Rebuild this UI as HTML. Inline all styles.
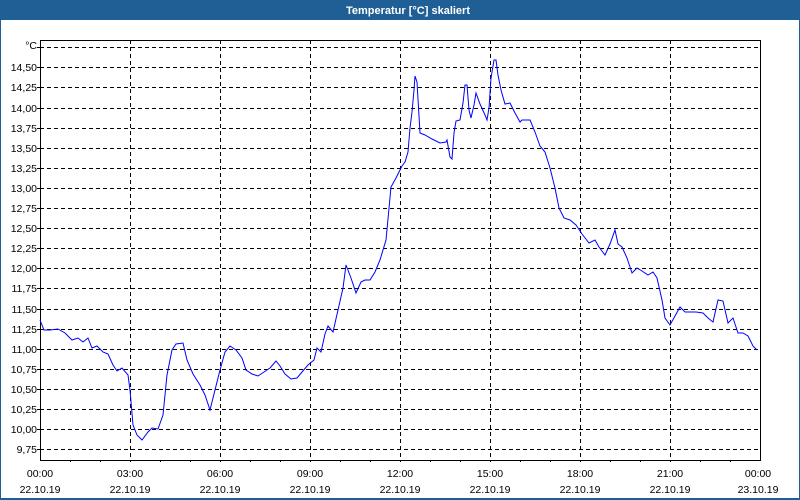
<!DOCTYPE html>
<html><head><meta charset="utf-8"><style>
html,body{margin:0;padding:0;width:800px;height:500px;overflow:hidden;background:#fff;font-family:"Liberation Sans",sans-serif}
</style></head><body>
<svg width="800" height="500" xmlns="http://www.w3.org/2000/svg" font-family="'Liberation Sans', sans-serif" font-size="10.5">
<rect x="0" y="0" width="800" height="500" fill="#fff"/>
<rect x="0" y="0" width="800" height="20" fill="#1f5f96"/>
<rect x="0" y="20" width="1" height="480" fill="#1f5f96"/>
<rect x="799" y="20" width="1" height="480" fill="#1f5f96"/>
<rect x="0" y="498" width="800" height="2" fill="#1f5f96"/>
<text x="408" y="14" fill="#fff" font-weight="bold" font-size="11" text-anchor="middle">Temperatur [°C] skaliert</text>
<g stroke="#000" stroke-width="1" stroke-dasharray="4,3" shape-rendering="crispEdges">
<line x1="40" y1="47.5" x2="760" y2="47.5"/>
<line x1="40" y1="67.5" x2="760" y2="67.5"/><line x1="40" y1="87.5" x2="760" y2="87.5"/>
<line x1="40" y1="108.5" x2="760" y2="108.5"/><line x1="40" y1="128.5" x2="760" y2="128.5"/>
<line x1="40" y1="148.5" x2="760" y2="148.5"/><line x1="40" y1="168.5" x2="760" y2="168.5"/>
<line x1="40" y1="188.5" x2="760" y2="188.5"/><line x1="40" y1="208.5" x2="760" y2="208.5"/>
<line x1="40" y1="228.5" x2="760" y2="228.5"/><line x1="40" y1="248.5" x2="760" y2="248.5"/>
<line x1="40" y1="268.5" x2="760" y2="268.5"/><line x1="40" y1="288.5" x2="760" y2="288.5"/>
<line x1="40" y1="309.5" x2="760" y2="309.5"/><line x1="40" y1="329.5" x2="760" y2="329.5"/>
<line x1="40" y1="349.5" x2="760" y2="349.5"/><line x1="40" y1="369.5" x2="760" y2="369.5"/>
<line x1="40" y1="389.5" x2="760" y2="389.5"/><line x1="40" y1="409.5" x2="760" y2="409.5"/>
<line x1="40" y1="429.5" x2="760" y2="429.5"/><line x1="40" y1="449.5" x2="760" y2="449.5"/>
<line x1="130.5" y1="40" x2="130.5" y2="460"/><line x1="220.5" y1="40" x2="220.5" y2="460"/>
<line x1="310.5" y1="40" x2="310.5" y2="460"/><line x1="400.5" y1="40" x2="400.5" y2="460"/>
<line x1="490.5" y1="40" x2="490.5" y2="460"/><line x1="580.5" y1="40" x2="580.5" y2="460"/>
<line x1="670.5" y1="40" x2="670.5" y2="460"/>
</g>
<rect x="40.5" y="40.5" width="720" height="420" fill="none" stroke="#000" shape-rendering="crispEdges"/>
<g stroke="#000" shape-rendering="crispEdges">
<path d="M70.5 460v2M100.5 460v2M130.5 460v2M160.5 460v2M190.5 460v2M220.5 460v2M250.5 460v2M280.5 460v2M310.5 460v2M340.5 460v2M370.5 460v2M400.5 460v2M430.5 460v2M460.5 460v2M490.5 460v2M520.5 460v2M550.5 460v2M580.5 460v2M610.5 460v2M640.5 460v2M670.5 460v2M700.5 460v2M730.5 460v2"/>
<path d="M37 47.5h3M37 67.5h3M37 87.5h3M37 108.5h3M37 128.5h3M37 148.5h3M37 168.5h3M37 188.5h3M37 208.5h3M37 228.5h3M37 248.5h3M37 268.5h3M37 288.5h3M37 309.5h3M37 329.5h3M37 349.5h3M37 369.5h3M37 389.5h3M37 409.5h3M37 429.5h3M37 449.5h3"/>
</g>
<g fill="#000" text-anchor="end">
<text x="37" y="49">°C</text>
<text x="37" y="71">14,50</text><text x="37" y="91">14,25</text><text x="37" y="112">14,00</text>
<text x="37" y="132">13,75</text><text x="37" y="152">13,50</text><text x="37" y="172">13,25</text>
<text x="37" y="192">13,00</text><text x="37" y="212">12,75</text><text x="37" y="232">12,50</text>
<text x="37" y="252">12,25</text><text x="37" y="272">12,00</text><text x="37" y="292">11,75</text>
<text x="37" y="313">11,50</text><text x="37" y="333">11,25</text><text x="37" y="353">11,00</text>
<text x="37" y="373">10,75</text><text x="37" y="393">10,50</text><text x="37" y="413">10,25</text>
<text x="37" y="433">10,00</text><text x="37" y="453">9,75</text>
</g>
<g fill="#000" text-anchor="middle">
<text x="40" y="477">00:00</text><text x="40" y="493">22.10.19</text>
<text x="130" y="477">03:00</text><text x="130" y="493">22.10.19</text>
<text x="220" y="477">06:00</text><text x="220" y="493">22.10.19</text>
<text x="310" y="477">09:00</text><text x="310" y="493">22.10.19</text>
<text x="400" y="477">12:00</text><text x="400" y="493">22.10.19</text>
<text x="490" y="477">15:00</text><text x="490" y="493">22.10.19</text>
<text x="580" y="477">18:00</text><text x="580" y="493">22.10.19</text>
<text x="670" y="477">21:00</text><text x="670" y="493">22.10.19</text>
<text x="758" y="477">00:00</text><text x="758" y="493">23.10.19</text>
</g>
<polyline fill="none" stroke="#0000ff" stroke-width="1" points="40,320 44,330 50,330 58,329 65,333 72,340 78,338 83,342 88,338 92,348 97,346 103,352 108,354 113,365 117,371 122,368 128,375 130,390 133,425 137,435 142,440 148,432 152,428 158,429 163,415 167,375 172,350 176,344 183,343 187,360 193,374 200,385 205,395 210,410 215,390 220,370 225,352 230,346 236,350 242,358 246,370 252,374 258,376 264,372 270,368 276,361 280,366 285,374 291,379 297,378 302,372 308,365 314,360 317,348 321,352 325,334 328,326 333,332 338,310 343,288 346,265 351,278 356,293 361,282 365,280 370,280 375,272 380,260 386,240 391,187 396,178 402,166 405,162 408,152 410,128 412,112 414,90 415,76 417,82 420,133 425,135 432,139 440,143 446,142 447,140 450,157 452,159 454,133 456,121 460,120 463,103 465,85 467,85 469,110 471,118 474,105 476,93 480,104 485,115 487,120 489,108 491,78 494,60 496,60 498,75 501,90 505,104 510,103 515,113 520,122 522,120 530,120 535,132 540,146 545,152 550,168 555,188 559,208 564,218 570,220 576,225 582,234 589,243 595,240 599,247 605,255 610,244 615,230 618,244 622,247 627,258 632,273 637,268 642,271 648,275 653,272 657,278 662,300 665,318 670,325 675,316 680,307 685,312 690,312 696,312 703,313 708,318 713,322 718,300 723,301 728,323 733,318 738,333 743,333 748,336 753,346 757,350"/>
</svg>
</body></html>
